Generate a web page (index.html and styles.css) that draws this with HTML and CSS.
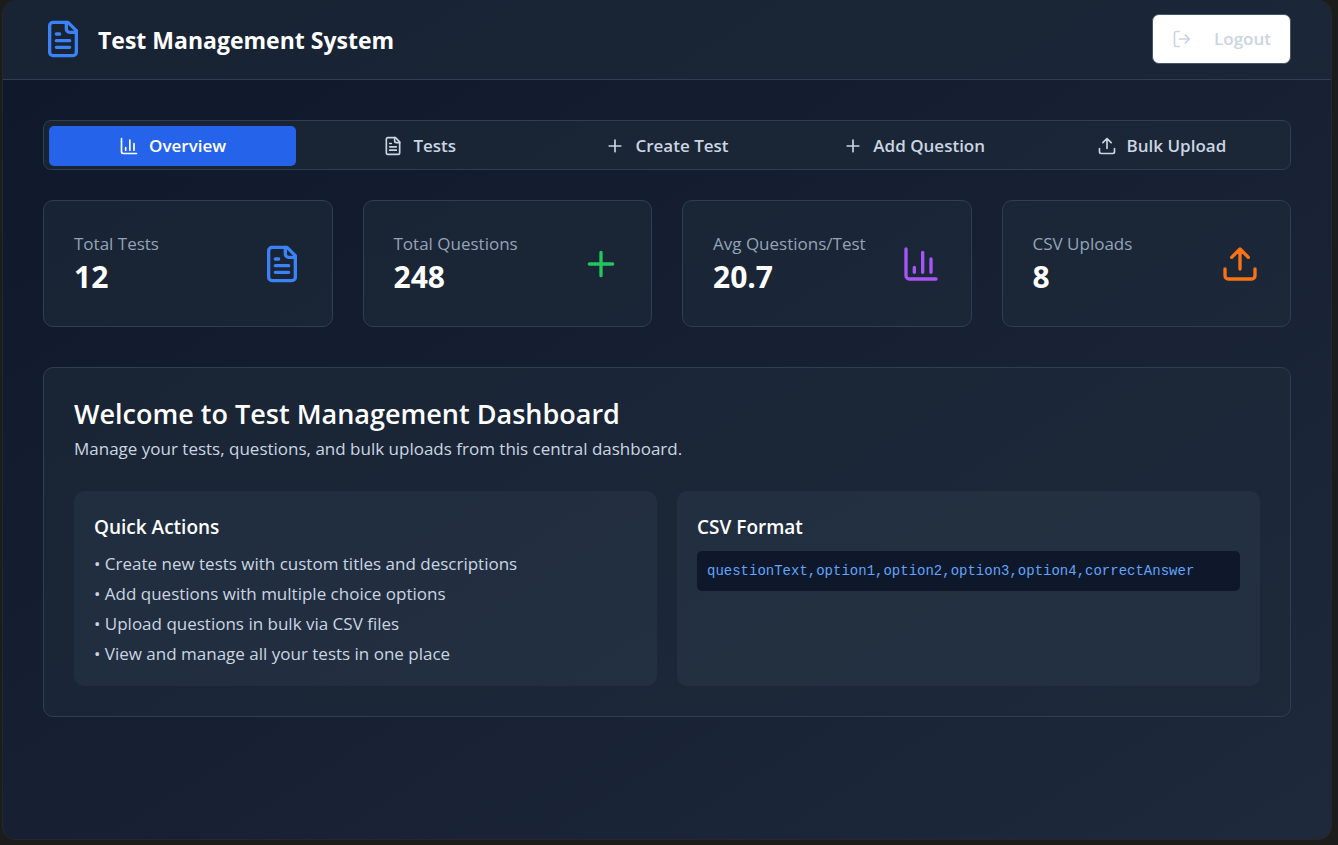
FILE: index.html
```html
<!DOCTYPE html>
<html lang="en">
<head>
<meta charset="utf-8">
<meta name="viewport" content="width=device-width, initial-scale=1">
<title>Test Management System</title>
<link rel="stylesheet" href="styles.css">
</head>
<body>
<svg class="sprite" aria-hidden="true">
  <symbol id="file" viewBox="0 0 24 24"><path d="M15 2H6a2 2 0 0 0-2 2v16a2 2 0 0 0 2 2h12a2 2 0 0 0 2-2V7Z"/><path d="M14 2v4a2 2 0 0 0 2 2h4M10 9H8M16 13H8M16 17H8"/></symbol>
  <symbol id="chart" viewBox="0 0 24 24"><path d="M3 3v16a2 2 0 0 0 2 2h16M18 17V9M13 17V5M8 17v-3"/></symbol>
  <symbol id="plus" viewBox="0 0 24 24"><path d="M5 12h14M12 5v14"/></symbol>
  <symbol id="upload" viewBox="0 0 24 24"><path d="M21 15v4a2 2 0 0 1-2 2H5a2 2 0 0 1-2-2v-4M17 8l-5-5-5 5M12 3v12"/></symbol>
  <symbol id="logout" viewBox="0 0 24 24"><path d="M9 21H5a2 2 0 0 1-2-2V5a2 2 0 0 1 2-2h4M16 17l5-5-5-5M21 12H9"/></symbol>
</svg>
<div class="app">
  <header class="header">
    <div class="brand">
      <svg class="icon-lg blue"><use href="#file"/></svg>
      <h1 class="brand-title">Test Management System</h1>
    </div>
    <button class="logout" type="button"><svg class="icon"><use href="#logout"/></svg>Logout</button>
  </header>
  <main class="main">
    <div class="tabs" role="tablist">
      <button class="tab active" type="button" role="tab" aria-selected="true"><svg class="icon"><use href="#chart"/></svg>Overview</button>
      <button class="tab" type="button" role="tab" aria-selected="false"><svg class="icon"><use href="#file"/></svg>Tests</button>
      <button class="tab" type="button" role="tab" aria-selected="false"><svg class="icon"><use href="#plus"/></svg>Create Test</button>
      <button class="tab" type="button" role="tab" aria-selected="false"><svg class="icon"><use href="#plus"/></svg>Add Question</button>
      <button class="tab" type="button" role="tab" aria-selected="false"><svg class="icon"><use href="#upload"/></svg>Bulk Upload</button>
    </div>
    <section class="stats">
      <div class="card stat">
        <div><p class="stat-label">Total Tests</p><p class="stat-value">12</p></div>
        <svg class="icon-lg blue"><use href="#file"/></svg>
      </div>
      <div class="card stat">
        <div><p class="stat-label">Total Questions</p><p class="stat-value">248</p></div>
        <svg class="icon-lg green"><use href="#plus"/></svg>
      </div>
      <div class="card stat">
        <div><p class="stat-label">Avg Questions/Test</p><p class="stat-value">20.7</p></div>
        <svg class="icon-lg purple"><use href="#chart"/></svg>
      </div>
      <div class="card stat">
        <div><p class="stat-label">CSV Uploads</p><p class="stat-value">8</p></div>
        <svg class="icon-lg orange"><use href="#upload"/></svg>
      </div>
    </section>
    <section class="card welcome">
      <h2 class="welcome-title">Welcome to Test Management Dashboard</h2>
      <p class="welcome-text">Manage your tests, questions, and bulk uploads from this central dashboard.</p>
      <div class="panels">
        <div class="panel">
          <h3 class="panel-title">Quick Actions</h3>
          <ul class="actions">
            <li>• Create new tests with custom titles and descriptions</li>
            <li>• Add questions with multiple choice options</li>
            <li>• Upload questions in bulk via CSV files</li>
            <li>• View and manage all your tests in one place</li>
          </ul>
        </div>
        <div class="panel">
          <h3 class="panel-title">CSV Format</h3>
          <code class="code">questionText,option1,option2,option3,option4,correctAnswer</code>
        </div>
      </div>
    </section>
  </main>
</div>
</body>
</html>
```
FILE: styles.css
```css
* { box-sizing: border-box; margin: 0; padding: 0; }

body {
  background: #1c1c1c;
  color: #cbd5e1;
  font-family: "Segoe UI", "Open Sans", "Noto Sans", sans-serif;
  font-size: 17px;
  line-height: 26px;
}

button { font: inherit; cursor: pointer; }
ul { list-style: none; }
.sprite { display: none; }

.icon, .icon-lg {
  flex: none;
  width: 20px;
  height: 20px;
  fill: none;
  stroke: currentColor;
  stroke-width: 2;
  stroke-linecap: round;
  stroke-linejoin: round;
}
.icon-lg { width: 40px; height: 40px; }
.blue { color: #3b82f6; }
.green { color: #22c55e; }
.purple { color: #a855f7; }
.orange { color: #f97316; }

.app {
  min-height: calc(100vh - 5px);
  margin: 0 6px 5px 2px;
  border: 1px solid #272727;
  border-top: 0;
  border-radius: 14px;
  overflow: hidden;
  background: linear-gradient(to bottom right, #0f172a, #1e293b);
}

.header {
  display: flex;
  align-items: center;
  justify-content: space-between;
  height: 80px;
  padding: 0 40px 1px;
  background: rgba(30, 43, 59, 0.6);
  border-bottom: 1px solid #2f3e50;
}
.brand { display: flex; align-items: center; gap: 15px; }
.brand-title { color: #fff; font-size: 23px; line-height: 35px; padding-top: 2px; font-weight: 700; }

.logout {
  display: flex;
  align-items: center;
  gap: 22px;
  height: 50px;
  padding: 0 19px;
  color: #cbd5e1;
  font-weight: 600;
  background: #fff;
  border: 1px solid #475569;
  border-radius: 7px;
}

.main { padding: 40px; }

.tabs {
  display: grid;
  grid-template-columns: repeat(5, 1fr);
  padding: 5px 5px 3px;
  margin-bottom: 30px;
  background: rgba(30, 43, 59, 0.6);
  border: 1px solid #2f3e50;
  border-radius: 8px;
}
.tab {
  display: flex;
  align-items: center;
  justify-content: center;
  gap: 10px;
  height: 40px;
  color: #cbd5e1;
  font-weight: 600;
  background: none;
  border: 0;
  border-radius: 5px;
}
.tab.active { color: #fff; background: #2563eb; }

.card {
  padding: 30px;
  background: rgba(30, 43, 59, 0.6);
  border: 1px solid #2f3e50;
  border-radius: 10px;
}

.stats {
  display: grid;
  grid-template-columns: repeat(4, 1fr);
  gap: 30px;
  margin-bottom: 40px;
}
.stat { display: flex; align-items: center; justify-content: space-between; }
.stat-label { color: #94a3b8; }
.stat-value { color: #fff; font-size: 30px; line-height: 39px; font-weight: 700; }

.welcome-title { color: #fff; font-size: 27px; line-height: 32px; font-weight: 600; margin-bottom: 6px; }
.welcome-text { margin-bottom: 29px; }

.panels { display: grid; grid-template-columns: 1fr 1fr; gap: 20px; }
.panel { padding: 20px; background: rgba(46, 60, 78, 0.4); border-radius: 10px; }
.panel-title { color: #fff; font-size: 19px; line-height: 32px; font-weight: 600; margin-bottom: 8px; }
.actions { display: grid; gap: 4px; margin-bottom: -1px; }
.code {
  display: block;
  padding: 10px;
  color: #60a5fa;
  font-family: "Liberation Mono", monospace;
  font-size: 14px;
  line-height: 20px;
  background: #0f172a;
  border-radius: 5px;
}
```
